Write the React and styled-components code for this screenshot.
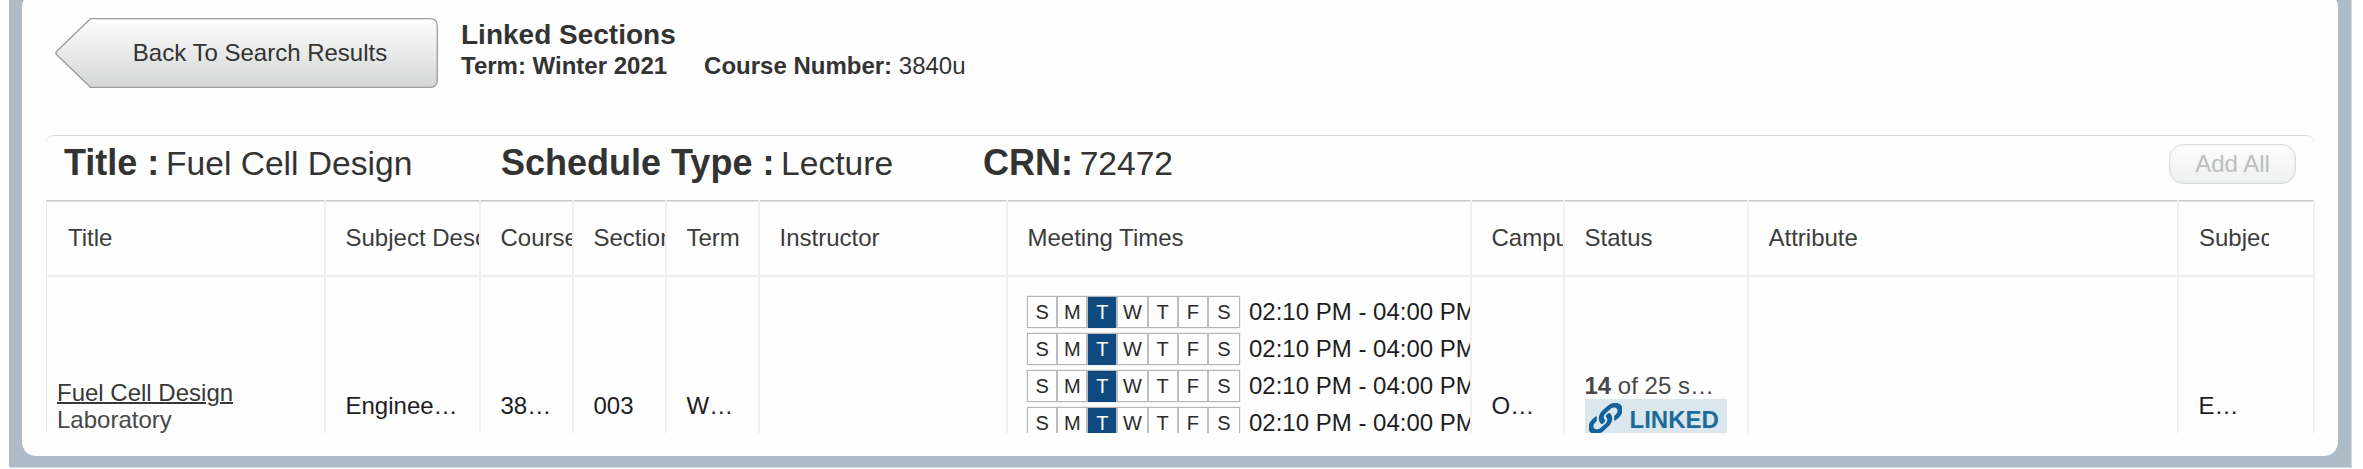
import React from "react";
import styled, { createGlobalStyle } from "styled-components";

const Global = createGlobalStyle`
  html, body { margin: 0; background: #fff; }
  body { font-family: "Liberation Sans", Arial, sans-serif; font-size: 24px; color: #333; overflow: hidden; }
  * { box-sizing: border-box; }
`;

const Viewport = styled.div`
  height: 469px;
  overflow: hidden;
  padding: 0 12px 0 9px;
`;

const Frame = styled.div`
  margin-top: -20px;
  height: 487px;
  padding: 13px 13px 11px;
  background: #aebbc9;
  box-shadow: 1px 1px 0 #d3dbe3;
`;

const Panel = styled.main`
  height: 463px;
  padding: 25px 24px 0;
  border-radius: 14px;
  background: #fefefe;
`;

const TopBar = styled.header`
  display: flex;
  height: 117px;
  padding-left: 9px;
`;

const BackButton = styled.button`
  display: grid;
  width: 383px;
  height: 70px;
  padding: 0;
  border: 0;
  background: none;
  font: inherit;
  color: #333;
`;

const BackShape = styled.svg`
  grid-area: 1 / 1;
`;

const BackLabel = styled.span`
  grid-area: 1 / 1;
  align-self: center;
  z-index: 1;
  padding-left: 27px;
  line-height: 28px;
`;

const Heading = styled.div`
  margin-left: 23px;
  padding-top: 1px;
`;

const PageTitle = styled.h1`
  margin: 0;
  font-size: 28px;
  line-height: 32px;
`;

const Facts = styled.div`
  display: flex;
  gap: 37px;
  line-height: 30px;
`;

const SectionBar = styled.section`
  display: flex;
  align-items: center;
  height: 65px;
  padding: 0 18px;
  border-top: 1px solid #d6d6d6;
  border-radius: 8px 8px 0 0;
`;

const Field = styled.div`
  width: ${(p) => p.$width}px;
  padding-bottom: 7px;
  line-height: 40px;
  white-space: nowrap;
`;

const FieldName = styled.b`
  font-size: 36px;
`;

const FieldValue = styled.span`
  font-size: 33.6px;
`;

const AddButton = styled.button`
  width: 127px;
  height: 40px;
  margin: 0 0 8px auto;
  padding: 0;
  border: 1px solid #d9dbdb;
  border-radius: 14px;
  background: linear-gradient(#fdfdfd, #eff0f0);
  box-shadow: inset 0 0 2px #d9dbdb;
  font: inherit;
  color: #bcbebf;
`;

const columns =
  "279px 155px 93px 93px 93px 248px 464px 93px 184px 430px 136px";

const Grid = styled.div`
  width: 2269px;
  height: 233px;
  overflow: hidden;
  border-left: 1px solid #eaeaea;
`;

const Row = styled.div`
  display: grid;
  grid-template-columns: ${columns};
  height: ${(p) => p.$height}px;
  border-bottom: 2px solid #efefef;
`;

const Cell = styled.div`
  display: flex;
  flex-direction: column;
  justify-content: center;
  overflow: hidden;
  padding-top: ${(p) => p.$top ?? 2}px;
  padding-left: ${(p) => p.$inset ?? 19.5}px;
  border-right: 2px solid #efefef;
  color: #1d1d1f;
  white-space: nowrap;
`;

const HeadCell = styled(Cell)`
  color: #3c3c3c;
  background: linear-gradient(#c9c9c9 0 1px, #dedede 1px 2px, transparent 2px) padding-box;
`;

const HeadText = styled.span`
  overflow: hidden;
  width: ${(p) => (p.$clip ? `${p.$clip}px` : "auto")};
  line-height: 34px;
`;

const CourseTitle = styled.div`
  line-height: 27px;
  padding-top: 1px;
  color: #484848;
`;

const CourseLink = styled.a`
  color: #383838;
  text-decoration: underline;
  text-decoration-thickness: 2px;
  text-underline-offset: 1px;
`;

const Meeting = styled.div`
  display: flex;
  align-items: center;
  gap: 9px;
  height: 37px;
`;

const Week = styled.div`
  display: grid;
  flex: none;
  grid-template-columns: repeat(7, 1fr);
  width: 213px;
  height: 32px;
  border: 1px solid #b4b4b9;
  box-shadow: 0 0 1px #b4b4b9;
`;

const Day = styled.span`
  border-right: 2px solid #bdbdc1;
  background: ${(p) => (p.$on ? "#0e4a80" : "transparent")};
  color: ${(p) => (p.$on ? "#fff" : "#2a2a2a")};
  font-size: 20px;
  line-height: 31px;
  text-align: center;

  &:last-child {
    border-right: 0;
  }
`;

const Status = styled.div`
  display: flex;
  flex-direction: column;
  align-items: flex-start;
  line-height: 27px;
  color: #484848;
`;

const Linked = styled.div`
  display: flex;
  align-items: center;
  width: 142px;
  height: 41px;
  padding-left: 4px;
  gap: 8px;
  background: #dbe7ed;
  color: #1b6c99;
  font-weight: bold;
`;

const dayNames = ["S", "M", "T", "W", "T", "F", "S"];
const heads = [
  ["Title", 21], ["Subject Description"], ["Course Number"], ["Section"], ["Term"],
  ["Instructor"], ["Meeting Times"], ["Campus"], ["Status"], ["Attribute"], ["Subject", 20, 70],
];

function LinkIcon() {
  return (
    <svg width="33" height="33" viewBox="0 0 512 512" fill="#13619d">
      <path transform="translate(256 240) rotate(-41) scale(1.06 .82) rotate(45) translate(-256 -256)" d="M326.612 185.391c59.747 59.809 58.927 155.698.36 214.59-.11.12-.24.25-.36.37l-67.2 67.2c-59.27 59.27-155.699 59.262-214.96 0-59.27-59.26-59.27-155.7 0-214.96l37.106-37.106c9.84-9.84 26.786-3.3 27.294 10.606.648 17.722 3.826 35.527 9.69 52.721 1.986 5.822.567 12.262-3.783 16.612l-13.087 13.087c-28.026 28.026-28.905 73.66-1.155 101.96 28.024 28.579 74.086 28.749 102.325.51l67.2-67.19c28.191-28.191 28.073-73.757 0-101.83-3.701-3.694-7.429-6.564-10.341-8.569a16.037 16.037 0 0 1-6.947-12.606c-.396-10.567 3.348-21.456 11.698-29.806l21.054-21.055c5.521-5.521 14.182-6.199 20.584-1.731a152.482 152.482 0 0 1 20.522 17.197zM467.547 44.449c-59.261-59.262-155.69-59.27-214.96 0l-67.2 67.2c-.12.12-.25.25-.36.37-58.566 58.892-59.387 154.781.36 214.59a152.454 152.454 0 0 0 20.521 17.196c6.402 4.468 15.064 3.789 20.584-1.731l21.054-21.055c8.35-8.35 12.094-19.239 11.698-29.806a16.037 16.037 0 0 0-6.947-12.606c-2.912-2.005-6.64-4.875-10.341-8.569-28.073-28.073-28.191-73.639 0-101.83l67.2-67.19c28.239-28.239 74.3-28.069 102.325.51 27.75 28.3 26.872 73.934-1.155 101.96l-13.087 13.087c-4.35 4.35-5.769 10.79-3.783 16.612 5.864 17.194 9.042 34.999 9.69 52.721.509 13.906 17.454 20.446 27.294 10.606l37.106-37.106c59.271-59.259 59.271-155.699.001-214.959z" />
    </svg>
  );
}

export default function App() {
  return (
    <Viewport>
      <Global />
      <Frame>
        <Panel>
          <TopBar>
            <BackButton>
              <BackShape width="383" height="70" viewBox="0 0 383 70">
                <defs>
                  <linearGradient id="backFill" x1="0" y1="0" x2="0" y2="1">
                    <stop offset="0" stopColor="#fdfdfd" />
                    <stop offset="1" stopColor="#d4d6d5" />
                  </linearGradient>
                </defs>
                <path d="M35.5 .7H375Q382.3 .7 382.3 8V62Q382.3 69.3 375 69.3H35.5L1.5 36.5Q.3 35 1.5 33.5Z" fill="url(#backFill)" stroke="#9c9c9c" strokeWidth="1.3" />
              </BackShape>
              <BackLabel>Back To Search Results</BackLabel>
            </BackButton>
            <Heading>
              <PageTitle>Linked Sections</PageTitle>
              <Facts>
                <b>Term: Winter 2021</b>
                <span><b>Course Number:</b> 3840u</span>
              </Facts>
            </Heading>
          </TopBar>
          <SectionBar>
            <Field $width={437}><FieldName>Title :</FieldName> <FieldValue>Fuel Cell Design</FieldValue></Field>
            <Field $width={482}><FieldName>Schedule Type :</FieldName> <FieldValue>Lecture</FieldValue></Field>
            <Field $width={300}><FieldName>CRN:</FieldName> <FieldValue>72472</FieldValue></Field>
            <AddButton disabled>Add All</AddButton>
          </SectionBar>
          <Grid>
            <Row $height={77}>
              {heads.map(([label, inset, clip]) => (
                <HeadCell key={label} $inset={inset} $top={0}>
                  <HeadText $clip={clip}>{label}</HeadText>
                </HeadCell>
              ))}
            </Row>
            <Row $height={257}>
              <Cell $inset={10}>
                <CourseTitle>
                  <CourseLink>Fuel Cell Design</CourseLink>
                  <div>Laboratory</div>
                </CourseTitle>
              </Cell>
              <Cell>Enginee…</Cell>
              <Cell>38…</Cell>
              <Cell>003</Cell>
              <Cell>W…</Cell>
              <Cell />
              <Cell $top={0} $inset={19}>
                {[0, 1, 2, 3, 4, 5].map((n) => (
                  <Meeting key={n}>
                    <Week>
                      {dayNames.map((day, i) => (
                        <Day key={i} $on={i === 2}>{day}</Day>
                      ))}
                    </Week>
                    02:10 PM - 04:00 PM
                  </Meeting>
                ))}
              </Cell>
              <Cell>O…</Cell>
              <Cell>
                <Status>
                  <span><b>14</b> of 25 s…</span>
                  <Linked><LinkIcon />LINKED</Linked>
                </Status>
              </Cell>
              <Cell />
              <Cell>E…</Cell>
            </Row>
          </Grid>
        </Panel>
      </Frame>
    </Viewport>
  );
}
